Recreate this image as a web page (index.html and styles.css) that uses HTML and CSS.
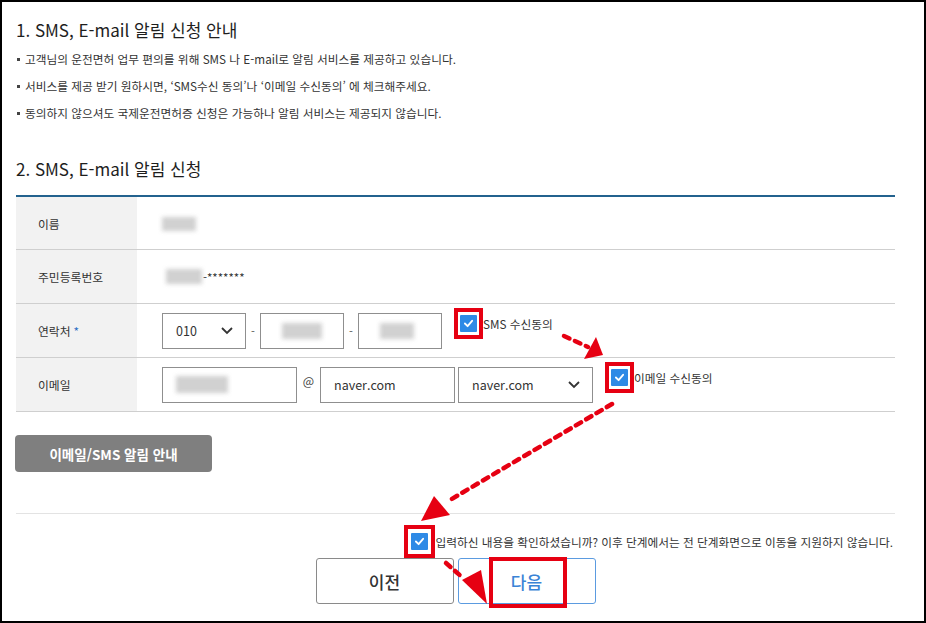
FILE: index.html
```html
<!DOCTYPE html>
<html lang="ko">
<head>
<meta charset="utf-8">
<title>SMS, E-mail 알림 신청</title>
<link rel="stylesheet" href="styles.css">
</head>
<body>
<div class="frame">
  <h2 class="heading">1. SMS, E-mail 알림 신청 안내</h2>
  <ul class="bullets">
    <li>고객님의 운전면허 업무 편의를 위해 SMS 나 E-mail로 알림 서비스를 제공하고 있습니다.</li>
    <li>서비스를 제공 받기 원하시면, ‘SMS수신 동의’나 ‘이메일 수신동의’ 에 체크해주세요.</li>
    <li>동의하지 않으셔도 국제운전면허증 신청은 가능하나 알림 서비스는 제공되지 않습니다.</li>
  </ul>

  <h2 class="heading heading-2">2. SMS, E-mail 알림 신청</h2>
  <div class="table">
    <div class="row">
      <div class="label">이름</div>
      <div class="value"><span class="blur blur-name"></span></div>
    </div>
    <div class="row">
      <div class="label">주민등록번호</div>
      <div class="value"><span class="blur blur-rrn"></span><span class="mask">-*******</span></div>
    </div>
    <div class="row">
      <div class="label">연락처 <span class="req">*</span></div>
      <div class="value">
        <div class="field select w84"><span>010</span><svg class="chev" viewBox="0 0 12 8"><polyline points="1,1 6,6 11,1"/></svg></div>
        <span class="dash">-</span>
        <div class="field w84"><span class="blur blur-phone"></span></div>
        <span class="dash">-</span>
        <div class="field w84"><span class="blur blur-phone2"></span></div>
        <label class="agree">
          <span class="mark"><span class="check"><svg viewBox="0 0 12 10"><polyline points="2,5 5,8 10,2"/></svg></span></span>
          <span class="agree-text">SMS 수신동의</span>
        </label>
      </div>
    </div>
    <div class="row">
      <div class="label">이메일</div>
      <div class="value">
        <div class="field w135"><span class="blur blur-mail"></span></div>
        <span class="at">@</span>
        <div class="field w135"><span>naver.com</span></div>
        <div class="field select w135 sel-mail"><span>naver.com</span><svg class="chev" viewBox="0 0 12 8"><polyline points="1,1 6,6 11,1"/></svg></div>
        <label class="agree">
          <span class="mark"><span class="check"><svg viewBox="0 0 12 10"><polyline points="2,5 5,8 10,2"/></svg></span></span>
          <span class="agree-text">이메일 수신동의</span>
        </label>
      </div>
    </div>
  </div>

  <button class="guide">이메일/SMS 알림 안내</button>

  <div class="sep"></div>

  <div class="confirm">
    <span class="mark"><span class="check"><svg viewBox="0 0 12 10"><polyline points="2,5 5,8 10,2"/></svg></span></span>
    <span class="confirm-text">입력하신 내용을 확인하셨습니까? 이후 단계에서는 전 단계화면으로 이동을 지원하지 않습니다.</span>
  </div>

  <div class="actions">
    <button class="btn btn-prev">이전</button>
    <button class="btn btn-next">다음<span class="highlight"></span></button>
  </div>

  <svg class="arrows" viewBox="0 0 926 623" width="926" height="623">
    <g class="dashes">
      <line x1="564" y1="336" x2="588" y2="347"/>
      <line x1="612" y1="404" x2="450" y2="500"/>
      <line x1="446" y1="563" x2="463" y2="578"/>
    </g>
    <g class="heads">
      <polygon points="596,337 584,359 603,355"/>
      <polygon points="434,496 450,515 421,521"/>
      <polygon points="462,580 481,570 487,604"/>
    </g>
  </svg>
</div>
</body>
</html>
```

FILE: styles.css
```css
* { box-sizing: border-box; }
html, body { margin: 0; padding: 0; background: #fff; }
body {
  font-family: "Noto Sans CJK KR", "Noto Sans", sans-serif;
  color: #333;
}
.frame {
  position: relative;
  width: 926px;
  height: 623px;
  border: 2px solid #000;
  padding: 16px 29px 0 14px;
  overflow: hidden;
}
.heading {
  margin: 0;
  font-size: 17px;
  line-height: 24px;
  font-weight: 400;
  color: #1e1e1e;
}
.heading-2 { margin-top: 31px; }
.bullets {
  list-style: none;
  margin: 3px 0 0;
  padding: 0;
  font-size: 11.7px;
  color: #333;
}
.bullets li {
  position: relative;
  line-height: 27px;
  padding-left: 9px;
}
.bullets li::before {
  content: "";
  position: absolute;
  left: 1px;
  top: 13px;
  width: 3px;
  height: 3px;
  background: #444;
}
.table {
  margin-top: 14px;
  border-top: 2px solid #23628e;
}
.row {
  display: flex;
  height: 54px;
  border-bottom: 1px solid #cfcfcf;
}
.row:first-child { height: 53px; }
.label {
  width: 121px;
  background: #f2f2f2;
  display: flex;
  align-items: center;
  padding-left: 22px;
  font-size: 11.8px;
  color: #333;
}
.req { color: #2f6fc4; margin-left: 3px; }
.value {
  flex: 1;
  display: flex;
  align-items: center;
  padding-left: 25px;
  font-size: 12px;
}
.blur {
  display: inline-block;
  background: #c9c9c9;
  filter: blur(2px);
  opacity: 0.85;
}
.blur-name { width: 34px; height: 14px; margin-top: 2px; }
.blur-rrn { width: 36px; height: 15px; margin-left: 4px; }
.blur-phone { width: 40px; height: 16px; margin-left: 8px; }
.blur-phone2 { width: 34px; height: 16px; margin-left: 8px; }
.blur-mail { width: 52px; height: 17px; }
.mask { font-size: 11.5px; color: #333; margin-left: 1px; }
.field {
  height: 36px;
  border: 1px solid #8f8f8f;
  display: flex;
  align-items: center;
  padding: 0 12px 0 13px;
  font-size: 12.5px;
  color: #333;
  background: #fff;
}
.w84 { width: 84px; }
.w135 { width: 135px; }
.select { justify-content: space-between; }
.sel-mail { margin-left: 3px; }
.chev {
  width: 12px;
  height: 8px;
  fill: none;
  stroke: #333;
  stroke-width: 1.8;
}
.dash {
  width: 14px;
  text-align: center;
  font-size: 11px;
  color: #555;
}
.at {
  width: 23px;
  text-align: center;
  font-size: 12px;
  color: #444;
  margin-top: -8px;
}
.agree {
  display: flex;
  align-items: center;
  align-self: flex-start;
  margin-top: 4px;
  margin-left: 12px;
}
.agree-text { font-size: 11.7px; color: #333; }
.mark {
  display: flex;
  align-items: center;
  justify-content: center;
  width: 29px;
  height: 31px;
  border: 4px solid #e60012;
  background: #fff;
}
.check {
  display: flex;
  align-items: center;
  justify-content: center;
  width: 17px;
  height: 17px;
  background: #2e8ae6;
  border-radius: 1px;
}
.check svg {
  width: 11px;
  height: 9px;
  fill: none;
  stroke: #fff;
  stroke-width: 2;
  stroke-linecap: round;
  stroke-linejoin: round;
}
.guide {
  display: block;
  margin: 23px 0 0 -1px;
  width: 197px;
  height: 37px;
  border: 0;
  border-radius: 4px;
  background: #7f7f7f;
  color: #fff;
  font-family: inherit;
  font-size: 13.5px;
  font-weight: 700;
}
.sep {
  margin-top: 41px;
  border-top: 1px solid #e3e3e3;
}
.confirm {
  margin-top: 11px;
  display: flex;
  align-items: center;
  justify-content: flex-end;
  padding-right: 2px;
}
.confirm .mark { height: 33px; width: 31px; }
.confirm-text { font-size: 11.7px; color: #333; }
.actions {
  display: flex;
  justify-content: center;
  gap: 4px;
}
.btn {
  position: relative;
  width: 138px;
  height: 46px;
  background: #fff;
  border-radius: 3px;
  font-family: inherit;
  font-size: 17px;
  font-weight: 500;
}
.btn-prev { border: 1px solid #8a8a8a; color: #333; }
.btn-next { border: 1px solid #5b9be0; color: #3a83d6; }
.highlight {
  position: absolute;
  left: 30px;
  top: -2px;
  width: 78px;
  height: 51px;
  border: 4px solid #e60012;
}
.arrows {
  position: absolute;
  left: -2px;
  top: -2px;
  pointer-events: none;
}
.dashes line {
  stroke: #e60012;
  stroke-width: 4.5;
  stroke-dasharray: 6 6;
  stroke-linecap: round;
}
.heads polygon { fill: #e60012; }
```
